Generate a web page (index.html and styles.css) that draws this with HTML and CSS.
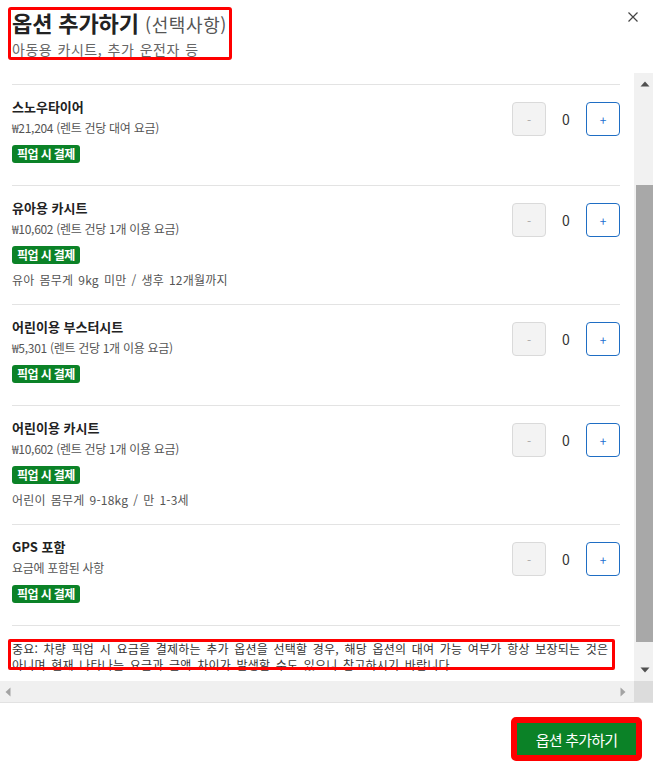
FILE: index.html
```html
<!DOCTYPE html>
<html lang="ko">
<head>
<meta charset="utf-8">
<title>옵션 추가하기</title>
<link rel="stylesheet" href="styles.css">
</head>
<body>
<div class="modal">
  <header class="modal-head">
    <div class="head-box">
      <h1 class="title">옵션 추가하기 <span class="title-opt">(선택사항)</span></h1>
      <p class="subtitle">아동용 카시트, 추가 운전자 등</p>
    </div>
    <button class="close" aria-label="닫기">
      <svg width="10" height="10" viewBox="0 0 10 10"><path d="M0.5 0.5L9.5 9.5M9.5 0.5L0.5 9.5" stroke="#444" stroke-width="1.2" fill="none"/></svg>
    </button>
  </header>

  <div class="scroll">
    <div class="viewport">
      <div class="content">
        <ul class="options">
          <li class="option">
            <div class="info">
              <div class="name">스노우타이어</div>
              <div class="price">₩21,204 (렌트 건당 대여 요금)</div>
              <span class="badge">픽업 시 결제</span>
            </div>
            <div class="qty">
              <button class="btn minus">-</button>
              <span class="count">0</span>
              <button class="btn plus">+</button>
            </div>
          </li>
          <li class="option">
            <div class="info">
              <div class="name">유아용 카시트</div>
              <div class="price">₩10,602 (렌트 건당 1개 이용 요금)</div>
              <span class="badge">픽업 시 결제</span>
              <div class="desc">유아 몸무게 9kg 미만 / 생후 12개월까지</div>
            </div>
            <div class="qty">
              <button class="btn minus">-</button>
              <span class="count">0</span>
              <button class="btn plus">+</button>
            </div>
          </li>
          <li class="option">
            <div class="info">
              <div class="name">어린이용 부스터시트</div>
              <div class="price">₩5,301 (렌트 건당 1개 이용 요금)</div>
              <span class="badge">픽업 시 결제</span>
            </div>
            <div class="qty">
              <button class="btn minus">-</button>
              <span class="count">0</span>
              <button class="btn plus">+</button>
            </div>
          </li>
          <li class="option">
            <div class="info">
              <div class="name">어린이용 카시트</div>
              <div class="price">₩10,602 (렌트 건당 1개 이용 요금)</div>
              <span class="badge">픽업 시 결제</span>
              <div class="desc">어린이 몸무게 9-18kg / 만 1-3세</div>
            </div>
            <div class="qty">
              <button class="btn minus">-</button>
              <span class="count">0</span>
              <button class="btn plus">+</button>
            </div>
          </li>
          <li class="option">
            <div class="info">
              <div class="name">GPS 포함</div>
              <div class="price">요금에 포함된 사항</div>
              <span class="badge">픽업 시 결제</span>
            </div>
            <div class="qty">
              <button class="btn minus">-</button>
              <span class="count">0</span>
              <button class="btn plus">+</button>
            </div>
          </li>
        </ul>
        <p class="notice">중요: 차량 픽업 시 요금을 결제하는 추가 옵션을 선택할 경우, 해당 옵션의 대여 가능 여부가 항상 보장되는 것은 아니며 현재 나타나는 요금과 금액 차이가 발생할 수도 있으니 참고하시기 바랍니다.</p>
      </div>
    </div>

    <div class="vbar">
      <div class="vbtn">
        <svg width="10" height="6" viewBox="0 0 10 6"><path d="M5 0.5L9.5 5.5H0.5Z" fill="#505050"/></svg>
      </div>
      <div class="vtrack"><div class="vthumb"></div></div>
      <div class="vbtn vbtn-down">
        <svg width="10" height="6" viewBox="0 0 10 6"><path d="M0.5 0.5H9.5L5 5.5Z" fill="#505050"/></svg>
      </div>
    </div>

    <div class="hbar">
      <svg width="6" height="10" viewBox="0 0 6 10"><path d="M5.5 0.5V9.5L0.5 5Z" fill="#a3a3a3"/></svg>
      <svg width="6" height="10" viewBox="0 0 6 10"><path d="M0.5 0.5V9.5L5.5 5Z" fill="#a3a3a3"/></svg>
    </div>
    <div class="corner"></div>
  </div>

  <footer class="modal-foot">
    <button class="submit">옵션 추가하기</button>
  </footer>
</div>
</body>
</html>
```

FILE: styles.css
```css
* {
  box-sizing: border-box;
}

html, body {
  margin: 0;
  padding: 0;
  background: #fff;
}

body {
  font-family: "Noto Sans CJK KR", "Noto Sans", sans-serif;
  color: #222;
}

.modal {
  width: 653px;
  height: 770px;
  display: flex;
  flex-direction: column;
  background: #fff;
}

/* header */
.modal-head {
  height: 73px;
  flex: none;
  display: flex;
  justify-content: space-between;
  align-items: flex-start;
  padding: 7px 15px 0 8px;
}

.head-box {
  width: 224px;
  border: 3px solid #ff0000;
  border-radius: 3px;
  padding: 0 1px 0 1px;
}

.title {
  margin: 0;
  font-size: 22px;
  font-weight: 700;
  line-height: 24px;
  color: #222;
  letter-spacing: -0.1px;
  white-space: nowrap;
}

.title-opt {
  font-size: 18px;
  font-weight: 400;
  color: #555;
  letter-spacing: 0.6px;
}

.subtitle {
  margin: 5px 0 0;
  font-size: 14px;
  line-height: 16px;
  color: #666;
  letter-spacing: 0.5px;
  word-spacing: 1px;
  white-space: nowrap;
}

.close {
  margin-top: 5px;
  width: 10px;
  height: 10px;
  padding: 0;
  border: 0;
  background: none;
  display: block;
}

.close svg {
  display: block;
}

/* scroll area */
.scroll {
  flex: none;
  display: grid;
  grid-template-columns: 634px 19px;
  grid-template-rows: 608px 22px;
}

.viewport {
  overflow: hidden;
}

.content {
  padding: 11px 0 0 12px;
}

.options {
  list-style: none;
  margin: 0;
  padding: 0;
  width: 608px;
  border-top: 1px solid #e3e3e3;
}

.option {
  display: flex;
  justify-content: space-between;
  align-items: flex-start;
  padding: 13px 0 16px;
  border-bottom: 1px solid #e3e3e3;
}

.info {
  display: flex;
  flex-direction: column;
  align-items: flex-start;
}

.name {
  font-size: 13px;
  font-weight: 700;
  line-height: 18px;
  color: #222;
  letter-spacing: 0;
}

.price {
  margin-top: 4px;
  font-size: 12px;
  line-height: 16px;
  color: #555;
  letter-spacing: -0.3px;
}

.badge {
  margin-top: 9px;
  margin-bottom: 6px;
  height: 18px;
  line-height: 18px;
  padding: 0 5px;
  background: #0b8227;
  color: #fff;
  font-size: 12px;
  font-weight: 700;
  border-radius: 3px;
  letter-spacing: -0.6px;
}

.desc {
  margin-top: 2px;
  font-size: 12px;
  line-height: 16px;
  color: #555;
  letter-spacing: 0.2px;
  word-spacing: 1.5px;
}

.qty {
  display: flex;
  align-items: center;
  margin-top: 4px;
}

.btn {
  width: 34px;
  height: 34px;
  padding: 0;
  border-radius: 4px;
  font-family: inherit;
  font-size: 12px;
  display: flex;
  align-items: center;
  justify-content: center;
}

.minus {
  background: #f3f3f3;
  border: 1px solid #dadada;
  color: #aaa;
}

.plus {
  background: #fff;
  border: 1px solid #1f6ec4;
  color: #1a6fd0;
}

.count {
  width: 40px;
  text-align: center;
  font-size: 14px;
  color: #333;
}

.notice {
  position: relative;
  margin: 15px 0 0;
  width: 608px;
  font-size: 12px;
  line-height: 16px;
  color: #333;
  letter-spacing: 0.2px;
  word-spacing: 2px;
}

.notice::after {
  content: "";
  position: absolute;
  top: -2px;
  left: -4px;
  right: 5px;
  bottom: 3px;
  border: 3px solid #ff0000;
  border-radius: 2px;
}

/* scrollbars */
.vbar {
  background: #f1f1f1;
  display: flex;
  flex-direction: column;
}

.vbtn {
  height: 21px;
  flex: none;
  display: flex;
  align-items: center;
  justify-content: center;
  padding-left: 3px;
}

.vbtn-down {
  height: 22px;
}

.vbtn svg {
  display: block;
}

.vtrack {
  flex: 1;
  padding: 91px 0 0 2px;
}

.vthumb {
  height: 457px;
  background: #a8a8a8;
}

.hbar {
  background: #f0f0f0;
  border-bottom: 1px solid #e2e2e2;
  display: flex;
  justify-content: space-between;
  align-items: center;
  padding: 0 8px 0 5px;
}

.hbar svg {
  display: block;
}

.corner {
  background: #dcdcdc;
  border-bottom: 1px solid #e2e2e2;
}

/* footer */
.modal-foot {
  flex: 1;
  display: flex;
  justify-content: flex-end;
  align-items: flex-start;
  padding: 14px 11px 0 0;
}

.submit {
  width: 131px;
  height: 44px;
  padding: 0;
  border: 6px solid #ff0000;
  border-radius: 5px;
  background: #0b8227;
  color: #fff;
  font-family: inherit;
  font-size: 15px;
  letter-spacing: -0.8px;
}
```
